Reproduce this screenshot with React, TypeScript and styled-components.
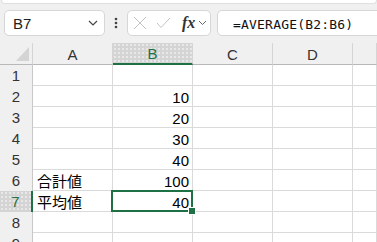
import styled, { createGlobalStyle, css } from "styled-components"

const GlobalStyle = createGlobalStyle`
  html, body {
    margin: 0;
    padding: 0;
    background: #f0f0f0;
    overflow: hidden;
  }
  body {
    font-family: "Liberation Sans", "Noto Sans CJK JP", sans-serif;
    color: #000;
  }
`

const GREEN = "#1e7145"

// last column is only partly in view, its letter is off screen
const columns = ["A", "B", "C", "D", ""]

const rows: { a?: string; b?: string }[] = [
  {},
  { b: "10" },
  { b: "20" },
  { b: "30" },
  { b: "40" },
  { a: "合計値", b: "100" },
  { a: "平均値", b: "40" },
  {},
  {},
]

const activeCol = 1
const activeRow = 7

export default function App() {
  return (
    <>
      <GlobalStyle />
      <TopStrip />
      <FormulaBar>
        <NameBox>
          <span>B7</span>
          <svg width="10" height="6" viewBox="0 0 10 6">
            <path d="M1 1 L5 5 L9 1" fill="none" stroke="#444" strokeWidth="1.2" />
          </svg>
        </NameBox>
        <Kebab>
          <svg width="4" height="12" viewBox="0 0 4 12">
            <circle cx="2" cy="2" r="1.3" fill="#444" />
            <circle cx="2" cy="6" r="1.3" fill="#444" />
            <circle cx="2" cy="10" r="1.3" fill="#444" />
          </svg>
        </Kebab>
        <FormulaButtons>
          <svg width="14" height="14" viewBox="0 0 14 14">
            <path d="M1 1 L13 13 M13 1 L1 13" stroke="#c4c4c4" strokeWidth="1" fill="none" />
          </svg>
          <svg width="15" height="12" viewBox="0 0 15 12">
            <path d="M1 6 L5 10.5 L14 1" stroke="#c4c4c4" strokeWidth="1" fill="none" />
          </svg>
          <Fx>fx</Fx>
          <svg width="9" height="6" viewBox="0 0 9 6">
            <path d="M1 1 L4.5 4.5 L8 1" fill="none" stroke="#666" strokeWidth="1" />
          </svg>
        </FormulaButtons>
        <FormulaInput>=AVERAGE(B2:B6)</FormulaInput>
      </FormulaBar>
      <Sheet>
        <Corner>
          <svg width="13" height="14" viewBox="0 0 13 14">
            <polygon points="13,0 13,14 0,14" fill="#d4d4d4" />
          </svg>
        </Corner>
        {columns.map((c, i) => (
          <ColHeader key={i} $active={i === activeCol}>
            {c}
          </ColHeader>
        ))}
        {rows.map((r, i) => {
          const n = i + 1
          return (
            <Row key={n}>
              <RowHeader $active={n === activeRow}>{n}</RowHeader>
              <Cell>{r.a}</Cell>
              <Cell $right $selected={n === activeRow}>
                {r.b}
                {n === activeRow && <FillHandle />}
              </Cell>
              <Cell />
              <Cell />
              <Cell />
            </Row>
          )
        })}
      </Sheet>
    </>
  )
}

const TopStrip = styled.div`
  height: 3px;
  margin: 0 0 0 1px;
  background: #fff;
  border: 1px solid #e0e0e0;
  border-top: none;
  border-radius: 0 0 6px 6px;
`

const FormulaBar = styled.div`
  display: flex;
  height: 26px;
  margin-top: 6px;
  padding-left: 4px;
`

const NameBox = styled.div`
  box-sizing: border-box;
  width: 101px;
  display: flex;
  align-items: center;
  justify-content: space-between;
  padding: 0 6px 0 8px;
  background: #fff;
  border: 1px solid #d6d6d6;
  border-radius: 5px;
  font-size: 15px;
  color: #222;
`

const Kebab = styled.div`
  width: 22px;
  display: flex;
  align-items: center;
  justify-content: center;
`

const FormulaButtons = styled.div`
  box-sizing: border-box;
  width: 84px;
  display: flex;
  align-items: center;
  gap: 9px;
  padding-left: 5px;
  background: #fff;
  border: 1px solid #d6d6d6;
  border-radius: 5px;
`

const Fx = styled.span`
  font-family: "Liberation Serif", "DejaVu Serif", serif;
  font-style: italic;
  font-weight: bold;
  font-size: 16px;
  color: #333;
  margin-left: 2px;
  margin-right: -6px;
`

const FormulaInput = styled.div`
  box-sizing: border-box;
  flex: 1;
  margin-left: 6px;
  margin-right: -10px;
  display: flex;
  align-items: center;
  padding: 2px 0 0 15px;
  background: #fff;
  border: 1px solid #d6d6d6;
  border-radius: 5px;
  font-family: "DejaVu Sans Mono", "Liberation Mono", monospace;
  font-size: 13px;
  letter-spacing: 0.2px;
  color: #111;
`

const Sheet = styled.div`
  margin-top: 7px;
  display: grid;
  grid-template-columns: 33px repeat(4, 80px) 1fr;
  grid-template-rows: 22px;
  grid-auto-rows: 21px;
  background: #fff;
`

const Row = styled.div`
  display: contents;
`

const activeBg = css`
  background-color: #d4d4d4;
  background-image: radial-gradient(#e8e8e8 0.8px, transparent 0.9px);
  background-size: 4px 4px;
`

const Corner = styled.div`
  box-sizing: border-box;
  display: flex;
  align-items: flex-end;
  justify-content: flex-end;
  padding: 0 3px 3px 0;
  background: #f0f0f0;
  border-right: 1px solid #d5d5d5;
  border-bottom: 1px solid #b8b8b8;
`

const ColHeader = styled.div<{ $active?: boolean }>`
  box-sizing: border-box;
  display: flex;
  align-items: center;
  justify-content: center;
  padding-top: 1px;
  background: #f0f0f0;
  border-right: 1px solid #d5d5d5;
  border-bottom: 1px solid #b8b8b8;
  font-size: 15px;
  color: #333;
  ${p =>
    p.$active &&
    css`
      ${activeBg};
      border-bottom: 2px solid ${GREEN};
      color: ${GREEN};
    `}
`

const RowHeader = styled.div<{ $active?: boolean }>`
  box-sizing: border-box;
  display: flex;
  align-items: center;
  justify-content: center;
  background: #f0f0f0;
  border-right: 1px solid #c8c8c8;
  font-size: 15px;
  color: #333;
  ${p =>
    p.$active &&
    css`
      ${activeBg};
      border-right: 2px solid ${GREEN};
      color: ${GREEN};
    `}
`

const Cell = styled.div<{ $right?: boolean; $selected?: boolean }>`
  position: relative;
  box-sizing: border-box;
  display: flex;
  align-items: flex-end;
  justify-content: ${p => (p.$right ? "flex-end" : "flex-start")};
  padding: 0 3px 1px 4px;
  border-right: 1px solid #dadada;
  border-bottom: 1px solid #dadada;
  font-size: 15px;
  line-height: 15px;
  white-space: nowrap;
  ${p =>
    p.$selected &&
    css`
      &::after {
        content: "";
        position: absolute;
        left: -2px;
        top: -1px;
        width: 82px;
        height: 22px;
        box-sizing: border-box;
        border: 2px solid ${GREEN};
        pointer-events: none;
      }
    `}
`

const FillHandle = styled.span`
  position: absolute;
  right: -3px;
  bottom: -3px;
  width: 6px;
  height: 6px;
  background: ${GREEN};
  outline: 1px solid #fff;
  z-index: 1;
`
